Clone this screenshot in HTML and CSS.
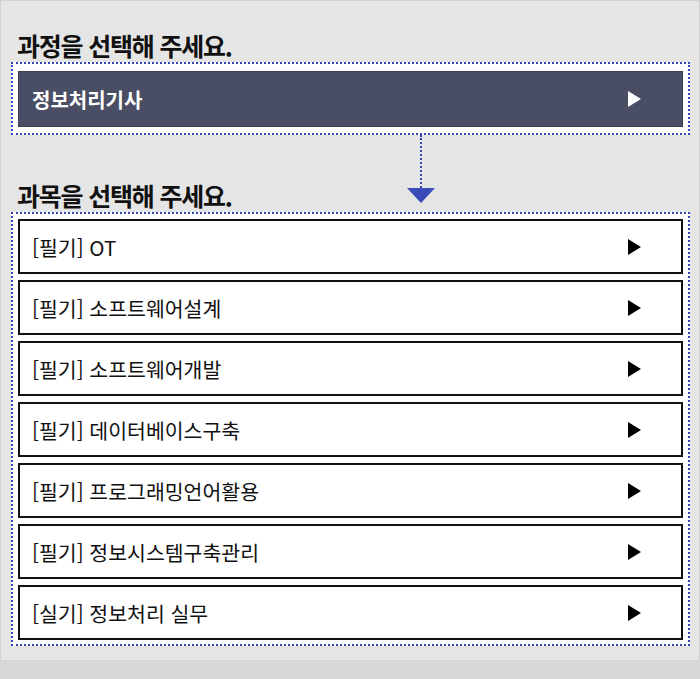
FILE: index.html
```html
<!DOCTYPE html>
<html lang="ko">
<head>
  <meta charset="UTF-8">
  <title>과정 선택</title>
  <link rel="stylesheet" href="styles.css">
</head>
<body>
<div class="panel">
  <h2 class="title">과정을 선택해 주세요.</h2>
  <div class="group">
    <div class="course">정보처리기사</div>
  </div>

  <!-- 과정 -> 과목 연결 -->
  <div class="step">
    <h2 class="title">과목을 선택해 주세요.</h2>
    <div class="arrow"><span class="line"></span><span class="head"></span></div>
  </div>

  <div class="group list">
    <div class="item">[필기] OT</div>
    <div class="item">[필기] 소프트웨어설계</div>
    <div class="item">[필기] 소프트웨어개발</div>
    <div class="item">[필기] 데이터베이스구축</div>
    <div class="item">[필기] 프로그래밍언어활용</div>
    <div class="item">[필기] 정보시스템구축관리</div>
    <div class="item">[실기] 정보처리 실무</div>
  </div>
</div>
</body>
</html>
```

FILE: styles.css
```css
*{
    margin: 0;
    padding: 0;
    box-sizing: border-box;
}
body{
    background: #d8d8d8;
    font-family: "Noto Sans CJK KR", "Noto Sans", sans-serif;
    color: #111;
}
.panel{
    width: 700px;
    background: #e5e5e5;
    border: 1px solid #d2d2d2;
    padding: 28px 9px 14px 10px;
}
.title{
    font-size: 25px;
    line-height: 32px;
    font-weight: bold;
    letter-spacing: -1.2px;
    margin: 0 0 1px 6px;
    color: #111;
}
.group{
    border: 2px dotted #3446b6;
    background: #fff;
    padding: 7px 5px 6px 5px;
}
.course{
    height: 56px;
    background: #4a4e64;
    border: 1px solid #3c3f52;
    color: #fff;
    font-size: 20px;
    font-weight: bold;
    padding: 0 41px 0 13px;
    display: flex;
    align-items: center;
    justify-content: space-between;
}
.course::after,
.item::after{
    content: "";
    border-left: 13px solid #fff;
    border-top: 8px solid transparent;
    border-bottom: 8px solid transparent;
}
.step{
    display: grid;
    grid-template-columns: 395px 29px;
    height: 77px;
}
.step .title{
    align-self: end;
}
.arrow{
    display: flex;
    flex-direction: column;
    align-items: center;
    padding-bottom: 9px;
}
.arrow .line{
    flex: 1;
    border-left: 2px dotted #3446b6;
}
.arrow .head{
    border-top: 15px solid #3a4cb8;
    border-left: 14.5px solid transparent;
    border-right: 14.5px solid transparent;
}
.list{
    display: flex;
    flex-direction: column;
    gap: 6px;
    padding: 5px 5px 4px 5px;
}
.item{
    height: 55px;
    border: 2px solid #111;
    background: #fff;
    font-size: 20.5px;
    padding: 0 40px 0 12px;
    display: flex;
    align-items: center;
    justify-content: space-between;
}
.item::after{
    border-left-color: #000;
}
```
